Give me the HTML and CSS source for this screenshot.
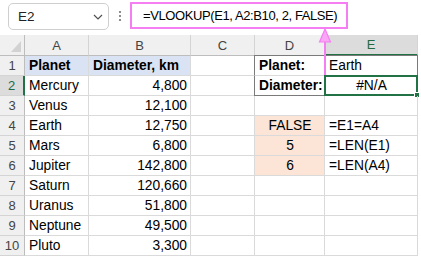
FILE: index.html
```html
<!DOCTYPE html>
<html lang="en">
<head>
    <meta charset="UTF-8">
    <title>VLOOKUP #N/A</title>
    <link rel="stylesheet" href="styles.css">
</head>
<body>

<div class="wrap">
    <div class="bar">
        <div class="namebox">
            <span>E2</span>
            <svg width="10" height="6" viewBox="0 0 10 6"><polyline points="1,1 5,5 9,1" fill="none" stroke="#505050" stroke-width="1.2"/></svg>
        </div>
        <div class="dots"><i></i><i></i><i></i></div>
        <div class="formula">=VLOOKUP(E1, A2:B10, 2, FALSE)</div>
    </div>

    <div class="sheet">
        <div class="hd corner"><svg width="10" height="11" viewBox="0 0 10 11"><polygon points="10,0 10,11 0,11" fill="#d2d2d2"/></svg></div>
        <div class="hd">A</div>
        <div class="hd">B</div>
        <div class="hd">C</div>
        <div class="hd">D</div>
        <div class="hd hd-sel">E</div>

        <div class="rn">1</div>
        <div class="c blue b">Planet</div>
        <div class="c blue b">Diameter, km</div>
        <div class="c"></div>
        <div class="c b box-l box-t">Planet:</div>
        <div class="c box-t box-r">Earth</div>

        <div class="rn rn-sel">2</div>
        <div class="c">Mercury</div>
        <div class="c r">4,800</div>
        <div class="c"></div>
        <div class="c b box-l box-b">Diameter:</div>
        <div class="c m sel">#N/A<span class="handle"></span></div>

        <div class="rn">3</div>
        <div class="c">Venus</div>
        <div class="c r">12,100</div>
        <div class="c"></div>
        <div class="c"></div>
        <div class="c"></div>

        <div class="rn">4</div>
        <div class="c">Earth</div>
        <div class="c r">12,750</div>
        <div class="c"></div>
        <div class="c m peach">FALSE</div>
        <div class="c">=E1=A4</div>

        <div class="rn">5</div>
        <div class="c">Mars</div>
        <div class="c r">6,800</div>
        <div class="c"></div>
        <div class="c m peach">5</div>
        <div class="c">=LEN(E1)</div>

        <div class="rn">6</div>
        <div class="c">Jupiter</div>
        <div class="c r">142,800</div>
        <div class="c"></div>
        <div class="c m peach">6</div>
        <div class="c">=LEN(A4)</div>

        <div class="rn">7</div>
        <div class="c">Saturn</div>
        <div class="c r">120,660</div>
        <div class="c"></div>
        <div class="c"></div>
        <div class="c"></div>

        <div class="rn">8</div>
        <div class="c">Uranus</div>
        <div class="c r">51,800</div>
        <div class="c"></div>
        <div class="c"></div>
        <div class="c"></div>

        <div class="rn">9</div>
        <div class="c">Neptune</div>
        <div class="c r">49,500</div>
        <div class="c"></div>
        <div class="c"></div>
        <div class="c"></div>

        <div class="rn">10</div>
        <div class="c">Pluto</div>
        <div class="c r">3,300</div>
        <div class="c"></div>
        <div class="c"></div>
        <div class="c"></div>
    </div>

    <!-- pointer from the formula bar down to E1 -->
    <svg class="arrow" width="16" height="50" viewBox="0 0 16 50">
        <line x1="8" y1="12" x2="8" y2="47" stroke="#f57ef2" stroke-width="2"/>
        <polygon points="8,1 13.5,14 2.5,14" fill="#f9a6f6" stroke="#f57ef2" stroke-width="1.2"/>
    </svg>
</div>

</body>
</html>
```

FILE: styles.css
```css
*{margin: 0; padding: 0; box-sizing: border-box;}
html,body{
    height: 100%;
}
body{
    background: #fff;
    font-family: "Liberation Sans", Arial, sans-serif;
    color: #000;
    overflow: hidden;
}
.wrap{
    position: relative;
    width: 421px;
    height: 256px;
}
.bar{
    height: 35px;
    display: flex;
    align-items: flex-start;
    padding-left: 8px;
}
.namebox{
    width: 101px;
    height: 27px;
    margin-top: 3px;
    border: 1px solid #cfcfcf;
    border-radius: 5px;
    display: flex;
    align-items: center;
    justify-content: space-between;
    padding: 0 5px 0 9px;
    font-size: 13.5px;
    color: #222;
}
.dots{
    width: 21px;
    display: flex;
    flex-direction: column;
    align-items: center;
    gap: 2px;
    margin-top: 11px;
}
.dots i{
    width: 2px;
    height: 2px;
    background: #8c8c8c;
}
.formula{
    width: 218px;
    height: 27px;
    margin-top: 2px;
    border: 2px solid #f57ef2;
    padding-left: 11px;
    font-size: 13px;
    letter-spacing: -0.4px;
    line-height: 23px;
    white-space: nowrap;
}
.sheet{
    display: grid;
    grid-template-columns: 25px 64px 102px 64px 70px 93px;
    grid-template-rows: 21px repeat(10, 20px);
    width: 418px;
    font-size: 13.8px;
}
.hd{
    background: #f0f0f0;
    border-right: 1px solid #d4d4d4;
    border-bottom: 1px solid #bdbdbd;
    color: #444;
    font-size: 13px;
    display: flex;
    align-items: center;
    justify-content: center;
}
.corner{
    justify-content: flex-end;
    align-items: flex-end;
    padding: 0 3px 3px 0;
    border-right: 1px solid #bdbdbd;
}
.hd-sel{
    background: #dcdcdc;
    color: #1e6b42;
    border-bottom: 2px solid #217346;
}
.rn{
    background: #f0f0f0;
    border-right: 1px solid #bdbdbd;
    border-bottom: 1px solid #d4d4d4;
    color: #444;
    font-size: 13px;
    display: flex;
    align-items: center;
    justify-content: center;
}
.rn-sel{
    background: #dcdcdc;
    color: #1e6b42;
    border-right: 2px solid #217346;
}
.c{
    position: relative;
    border-right: 1px solid #dadada;
    border-bottom: 1px solid #dadada;
    padding: 0 3px 0 4px;
    line-height: 19px;
    white-space: nowrap;
}
.b{ font-weight: bold; }
.r{ text-align: right; }
.m{ text-align: center; }
.blue{ background: #dae3f3; }
.peach{ background: #fce4d6; }
.box-l{ border-left: 1px solid #7a7a7a; margin-left: -1px; }
.box-t{ border-top: 1px solid #7a7a7a; margin-top: -1px; }
.box-r{ border-right: 1px solid #7a7a7a; }
.box-b{ border-bottom: 1px solid #7a7a7a; }
.sel{
    border: 2px solid #217346;
    margin: -1px 0 0 -1px;
    line-height: 17px;
}
.handle{
    position: absolute;
    right: -4px;
    bottom: -4px;
    width: 6px;
    height: 6px;
    background: #217346;
    border: 1px solid #fff;
}
.arrow{
    position: absolute;
    left: 317px;
    top: 28px;
}
```
